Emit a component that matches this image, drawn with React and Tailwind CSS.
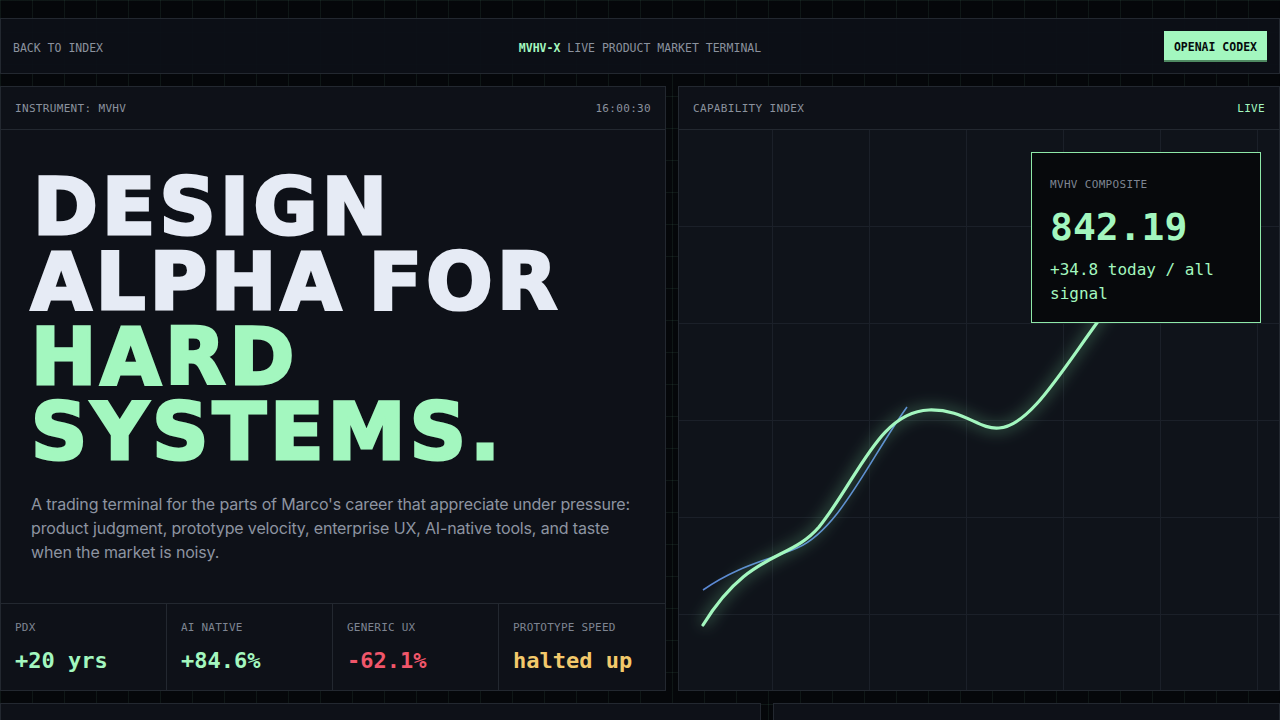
import React from 'react';

const mono = "font-['DejaVu_Sans_Mono','Liberation_Mono',monospace]";

const stats = [
  { label: 'PDX', value: '+20 yrs', color: 'text-[#a3f7bf]' },
  { label: 'AI NATIVE', value: '+84.6%', color: 'text-[#a3f7bf]' },
  { label: 'GENERIC UX', value: '-62.1%', color: 'text-[#f0566a]' },
  { label: 'PROTOTYPE SPEED', value: 'halted up', color: 'text-[#f3c96b]' },
];

const PanelHeader = ({ left, right, rightClass = 'text-[#8b929e]' }) => (
  <div className={`h-[43px] shrink-0 flex items-center justify-between px-[14px] pt-[2px] border-b border-[#232830] ${mono} text-[11px] tracking-[0.03em]`}>
    <span className="text-[#8b929e]">{left}</span>
    <span className={rightClass}>{right}</span>
  </div>
);

const Chart = () => (
  <div className="relative flex-1 bg-[#0f131a] bg-[linear-gradient(#1b2029_1px,transparent_1px),linear-gradient(90deg,#1b2029_1px,transparent_1px)] bg-[size:97px_97px] bg-[position:-4px_-1px] overflow-hidden">
    <svg className="absolute inset-0" width="600" height="560" viewBox="0 0 600 560" fill="none">
      <defs>
        <filter id="glow" x="-20%" y="-20%" width="140%" height="140%">
          <feGaussianBlur stdDeviation="7" />
        </filter>
      </defs>
      <path
        d="M24 460 C60 435 90 430 118 418 C160 400 190 330 228 277"
        stroke="#5b88d4"
        strokeWidth="1.6"
      />
      <path
        d="M24 495 C70 420 110 432 140 397 C180 347 200 282 250 280 C285 279 300 300 320 298 C350 296 380 245 420 190 L470 100"
        stroke="#86efac"
        strokeOpacity="0.25"
        strokeWidth="10"
        filter="url(#glow)"
      />
      <path
        d="M24 495 C70 420 110 432 140 397 C180 347 200 282 250 280 C285 279 300 300 320 298 C350 296 380 245 420 190 L470 100"
        stroke="#a3f7bf"
        strokeWidth="3.2"
        strokeLinecap="round"
      />
    </svg>
    <div className={`absolute left-[352px] top-[22px] w-[230px] h-[171px] border border-[#8ee8a8] bg-[#07090c] px-[18px] pt-[24px] ${mono}`}>
      <div className="text-[11px] tracking-[0.03em] text-[#7e8592]">MVHV COMPOSITE</div>
      <div className="mt-[11px] text-[38px] leading-[44px] font-bold text-[#a3f7bf]">842.19</div>
      <div className="mt-[9px] text-[16px] leading-[24px] text-[#a3f7bf]">+34.8 today / all signal</div>
    </div>
  </div>
);

export default function App() {
  return (
    <div className="min-h-screen h-[720px] overflow-hidden bg-[#05070a] bg-[linear-gradient(rgba(110,190,150,0.09)_1px,transparent_1px),linear-gradient(90deg,rgba(110,190,150,0.09)_1px,transparent_1px)] bg-[size:32px_32px] pt-[18px] font-['Inter',sans-serif]">
      {/* top bar */}
      <div className={`h-[56px] grid grid-cols-3 items-center border border-[#232830] bg-[#0d1017]/95 px-[12px] ${mono} text-[11.5px]`}>
        <span className="mt-[6px] text-[#8b929e]">BACK TO INDEX</span>
        <span className="mt-[6px] justify-self-center text-[#8b929e] whitespace-nowrap">
          <span className="font-bold text-[#a3f7bf]">MVHV-X</span> LIVE PRODUCT MARKET TERMINAL
        </span>
        <span className="justify-self-end">
          <span className="inline-flex items-center h-[31px] px-[10px] pt-[5px] bg-[#a3f7bf] border-b-2 border-[#4f8a62] text-[#06090c] font-bold text-[11.5px]">
            OPENAI CODEX
          </span>
        </span>
      </div>

      {/* main panels */}
      <div className="mt-3 grid grid-cols-[666px_1fr] gap-3 h-[605px]">
        <div className="flex flex-col border border-[#232830] bg-[#0e1118]">
          <PanelHeader left="INSTRUMENT: MVHV" right="16:00:30" />
          <div className="px-[30px] pt-[40px]">
            <h1 className="font-['DejaVu_Sans',sans-serif] font-bold text-[78px] leading-[75px] tracking-[0.055em] [word-spacing:-8px] text-[#e6ebf5] [-webkit-text-stroke:3.2px_currentColor]">
              <span className="ml-[2px]">DESIGN</span><br />ALPHA FOR<br />
              <span className="text-[#a3f7bf]">HARD<br />SYSTEMS.</span>
            </h1>
            <p className="mt-[22px] text-[16px] leading-[24px] tracking-[-0.01em] text-[#8d94a1] font-['Inter',sans-serif]">
              A trading terminal for the parts of Marco's career that appreciate under pressure:<br />
              product judgment, prototype velocity, enterprise UX, AI-native tools, and taste<br />
              when the market is noisy.
            </p>
          </div>
          <div className="mt-auto grid grid-cols-4 h-[87px] border-t border-[#232830]">
            {stats.map((s, i) => (
              <div key={s.label} className={`px-[14px] pt-[16px] ${i < 3 ? 'border-r border-[#232830]' : ''} ${mono}`}>
                <div className="text-[11px] tracking-[0.02em] text-[#7e8592]">{s.label}</div>
                <div className={`mt-[10px] text-[22px] leading-[28px] font-bold ${s.color}`}>{s.value}</div>
              </div>
            ))}
          </div>
        </div>

        <div className="flex flex-col border border-[#232830] bg-[#0e1118]">
          <PanelHeader left="CAPABILITY INDEX" right="LIVE" rightClass="text-[#a3f7bf]" />
          <Chart />
        </div>
      </div>

      {/* lower row (cut off) */}
      <div className="mt-3 grid grid-cols-[761px_1fr] gap-3 h-[60px]">
        <div className="border border-[#232830] bg-[#0e1118]">
          <PanelHeader left="WATCHLIST" right="SORTED BY MARKET VALUE" />
        </div>
        <div className="border border-[#232830] bg-[#0e1118]">
          <PanelHeader left="ORDER BOOK" right="DEPTH" />
        </div>
      </div>
    </div>
  );
}
